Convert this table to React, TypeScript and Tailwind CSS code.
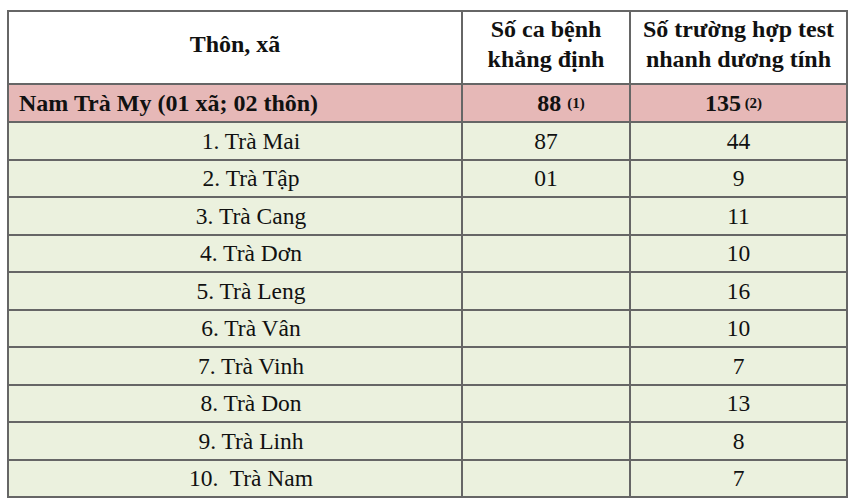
import React from "react";

const rows: [string, string, string][] = [
  ["1. Trà Mai", "87", "44"],
  ["2. Trà Tập", "01", "9"],
  ["3. Trà Cang", "", "11"],
  ["4. Trà Dơn", "", "10"],
  ["5. Trà Leng", "", "16"],
  ["6. Trà Vân", "", "10"],
  ["7. Trà Vinh", "", "7"],
  ["8. Trà Don", "", "13"],
  ["9. Trà Linh", "", "8"],
  ["10.\u00a0 Trà Nam", "", "7"],
];

const cell = "border-2 border-[#666] font-['Liberation_Serif'] leading-[30px]";

export default function App() {
  return (
    <div className="w-[850px] h-[499px] bg-white pt-[10px] pl-[7px] text-[#111] font-['Liberation_Serif']">
      <table className="border-collapse table-fixed w-[839px] font-['Liberation_Serif']">
        <colgroup>
          <col className="w-[454px]" />
          <col className="w-[168px]" />
          <col className="w-[217px]" />
        </colgroup>
        <thead>
          <tr className="h-[73px] bg-white">
            <th className={`${cell} text-[24px] font-bold text-center align-middle pb-[8px]`}>Thôn, xã</th>
            <th className={`${cell} text-[24px] font-bold text-center align-middle pb-[8px]`}>
              Số ca bệnh
              <br />
              khẳng định
            </th>
            <th className={`${cell} text-[24px] font-bold text-center align-middle pb-[8px]`}>
              Số trường hợp test
              <br />
              nhanh dương tính
            </th>
          </tr>
        </thead>
        <tbody>
          <tr className="h-[38px] bg-[#e6b8b7]">
            <td className={`${cell} text-[24px] font-bold pl-[10px] text-left`}>Nam Trà My (01 xã; 02 thôn)</td>
            <td className={`${cell} text-[24px] font-bold text-center pl-[30px]`}>
              88 <sup className="text-[15px] font-bold relative -top-[3px]">(1)</sup>
            </td>
            <td className={`${cell} text-[24px] font-bold text-center pr-[10px]`}>
              135<sup className="text-[15px] font-bold relative -top-[3px]"> (2)</sup>
            </td>
          </tr>
          {rows.map((r, i) => (
            <tr key={i} className="h-[37.5px] bg-[#ebf1de]">
              <td className={`${cell} text-[23.5px] text-center pl-[32px]`}>{r[0]}</td>
              <td className={`${cell} text-[23.5px] text-center`}>{r[1]}</td>
              <td className={`${cell} text-[23.5px] text-center`}>{r[2]}</td>
            </tr>
          ))}
        </tbody>
      </table>
    </div>
  );
}
